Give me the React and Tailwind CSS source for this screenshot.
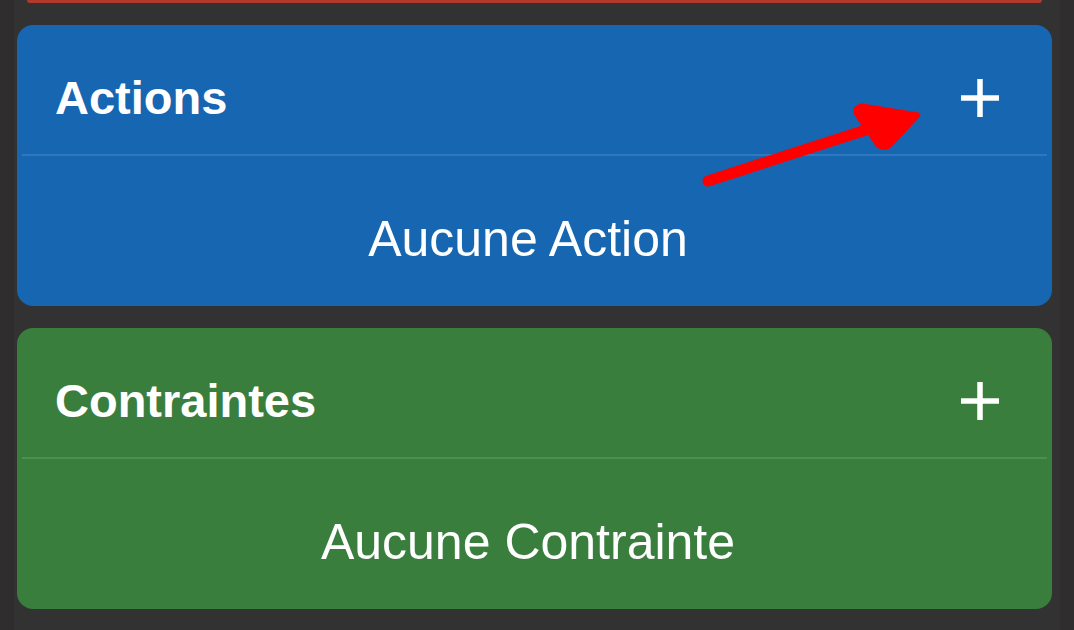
import React from "react";

const SECTIONS = [
  {
    key: "actions",
    title: "Actions",
    empty: "Aucune Action",
    bg: "bg-[#1666b1]",
    line: "bg-[#2f78bd]",
  },
  {
    key: "contraintes",
    title: "Contraintes",
    empty: "Aucune Contrainte",
    bg: "bg-[#3a7e3d]",
    line: "bg-[#4d8f4c]",
  },
];

const PlusIcon = () => (
  <svg width="40" height="40" viewBox="0 0 40 40" className="block">
    <path d="M20 1v38M1 20h38" stroke="white" strokeWidth="5.5" />
  </svg>
);

const Section = ({ section }) => (
  <div className={`${section.bg} rounded-[16px] h-[281px] flex flex-col`}>
    {/* Header */}
    <div className="h-[129px] flex items-center justify-between pl-[38px] pr-[52px] pt-[16px]">
      <h2 className="text-[47px] leading-none font-bold text-white">{section.title}</h2>
      <PlusIcon />
    </div>
    <div className={`h-[2px] mx-[5px] ${section.line}`} />
    {/* Body */}
    <div className="flex-1 flex items-center justify-center pt-[16px] pr-[13px]">
      <p className="text-[50px] leading-none text-white">{section.empty}</p>
    </div>
  </div>
);

const App = () => {
  return (
    <div
      className="relative w-[1074px] h-[630px] overflow-hidden bg-[#333232] flex"
      style={{ fontFamily: '"Liberation Sans", Arial, sans-serif' }}
    >
      <div className="w-[14px] bg-[#2f2d2d]" />
      <div className="flex-1 pl-[3px] pr-[8px] flex flex-col gap-[22px]">
        {/* previous card, cut off at the top */}
        <div className="h-[3px] mx-[10px] bg-[#b23a2c] rounded-b-[6px]" />
        {SECTIONS.map((s) => (
          <Section key={s.key} section={s} />
        ))}
      </div>
      <div className="w-[14px] bg-[#2f2d2d]" />

      {/* annotation arrow */}
      <svg
        className="absolute left-0 top-0 pointer-events-none"
        width="1074"
        height="630"
        viewBox="0 0 1074 630"
      >
        <path d="M708 181 L872 128" stroke="#ff0000" strokeWidth="11" strokeLinecap="round" />
        <path d="M918 115 L862 106 Q852 108 858 116 L878 145 Q884 150 890 145 Z" fill="#ff0000" stroke="#ff0000" strokeWidth="5" strokeLinejoin="round" />
      </svg>
    </div>
  );
};

export default App;
